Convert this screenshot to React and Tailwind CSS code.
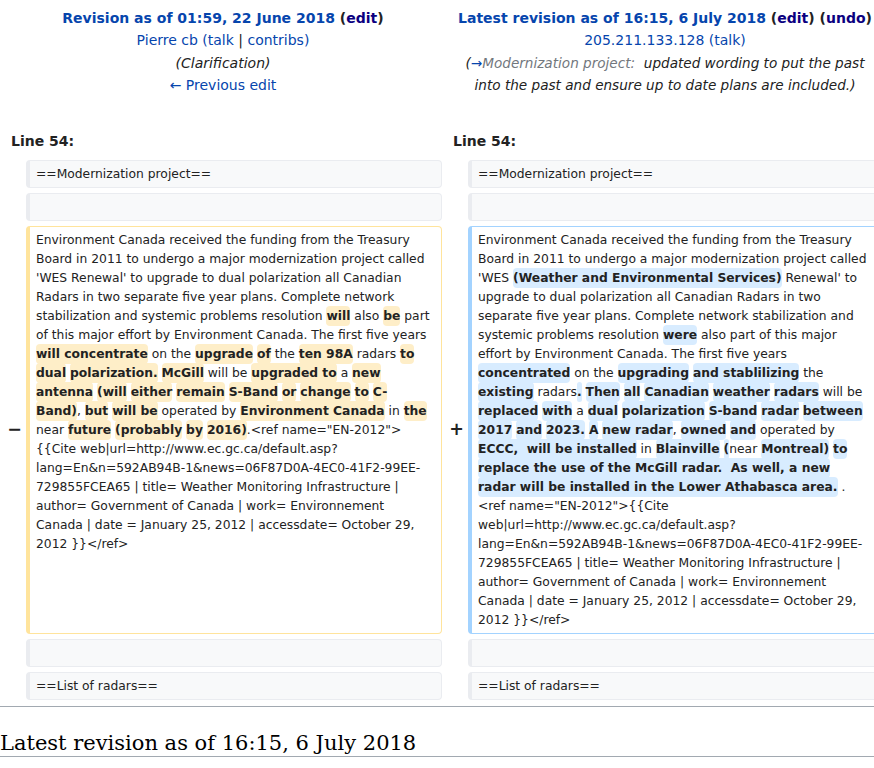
import React from "react";

const D = ({ children }) => (
  <span className="font-bold bg-[#feeec8] rounded-[0.33em] py-[0.25em]">{children}</span>
);
const A = ({ children }) => (
  <span className="font-bold bg-[#d8ecff] rounded-[0.33em] py-[0.25em]">{children}</span>
);

const boxBase =
  "border border-l-4 rounded-[0.33em] px-[6px] pt-[4px] pb-[3px] text-[12.32px] leading-[19px] text-[#222] whitespace-pre overflow-hidden";
const ctx = boxBase + " bg-[#f8f9fa] border-[#eaecf0]";

function Marker({ ch }) {
  return (
    <div className="flex items-center justify-end pr-[4px] text-[17.5px] font-bold text-[#222] leading-none">
      {ch}
    </div>
  );
}

export default function App() {
  const link = "text-[#0645ad]";
  const visited = "text-[#0b0080]";
  return (
    <div className="w-full overflow-hidden bg-white font-['DejaVu_Sans',sans-serif] text-[#222]">
      <div className="w-[884px]">
        {/* Header */}
        <div className="grid grid-cols-[442px_442px] pt-[7px] text-[14px] leading-[22.4px] text-center">
          <div className="pl-[4px]">
            <div className="px-[7px]">
              <div className="font-bold">
                <span className={link}>Revision as of 01:59, 22 June 2018</span>{" "}
                <span>
                  (<span className={visited}>edit</span>)
                </span>
              </div>
              <div>
                <span className={link}>Pierre cb</span>{" "}
                <span className={link}>
                  (talk <span className="text-[#222]">|</span> contribs)
                </span>
              </div>
              <div className="italic">(Clarification)</div>
              <div className={link}>← Previous edit</div>
            </div>
          </div>
          <div className="pl-[4px]">
            <div className="px-[7px]">
              <div className="font-bold">
                <span className={link}>Latest revision as of 16:15, 6 July 2018</span>{" "}
                <span>
                  (<span className={visited}>edit</span>)
                </span>{" "}
                <span>
                  (<span className={visited}>undo</span>)
                </span>
              </div>
              <div>
                <span className={link}>205.211.133.128</span>{" "}
                <span className={link}>(talk)</span>
              </div>
              <div className="italic text-[13.6px]">
                (<span className={link}>→</span>
                <span className="text-[#72777d]">Modernization project:</span>
                {"\u00a0 updated wording to put the past"}
                <br />
                into the past and ensure up to date plans are included.)
              </div>
            </div>
          </div>
        </div>

        {/* Line numbers */}
        <div className="grid grid-cols-[442px_442px] mt-[33px] text-[14px] leading-[22.4px] font-bold">
          <div className="pl-[11px]">Line 54:</div>
          <div className="pl-[11px]">Line 54:</div>
        </div>

        {/* Diff */}
        <div className="grid grid-cols-[26px_416px_26px_416px] gap-y-[5px] mt-[8px]">
          <div />
          <div className={ctx}>==Modernization project==</div>
          <div />
          <div className={ctx}>==Modernization project==</div>

          <div />
          <div className={ctx}>{" "}</div>
          <div />
          <div className={ctx}>{" "}</div>

          <Marker ch="−" />
          <div className={boxBase + " bg-white border-[#ffe49c]"}>
            {"Environment Canada received the funding from the Treasury\nBoard in 2011 to undergo a major modernization project called\n'WES Renewal' to upgrade to dual polarization all Canadian\nRadars in two separate five year plans. Complete network\nstabilization and systemic problems resolution "}
            <D>will</D>
            {" also "}
            <D>be</D>
            {" part\nof this major effort by Environment Canada. The first five years\n"}
            <D>will concentrate</D>
            {" on the "}
            <D>upgrade</D> <D>of</D>
            {" the "}
            <D>ten 98A</D>
            {" radars "}
            <D>to</D>
            {"\n"}
            <D>dual</D> <D>polarization.</D> <D>McGill</D>
            {" will be "}
            <D>upgraded to</D>
            {" a "}
            <D>new</D>
            {"\n"}
            <D>antenna</D> <D>(will</D> <D>either</D> <D>remain</D> <D>S-Band</D> <D>or</D> <D>change</D>{" "}
            <D>to</D> <D>C-</D>
            {"\n"}
            <D>Band)</D>
            {", "}
            <D>but</D> <D>will be</D>
            {" operated by "}
            <D>Environment Canada</D>
            {" in "}
            <D>the</D>
            {"\nnear "}
            <D>future</D> <D>(probably</D> <D>by</D> <D>2016)</D>
            {'.<ref name="EN-2012">\n{{Cite web|url=http://www.ec.gc.ca/default.asp?\nlang=En&n=592AB94B-1&news=06F87D0A-4EC0-41F2-99EE-\n729855FCEA65 | title= Weather Monitoring Infrastructure |\nauthor= Government of Canada | work= Environnement\nCanada | date = January 25, 2012 | accessdate= October 29,\n2012 }}</ref>'}
          </div>

          <Marker ch="+" />
          <div className={boxBase + " bg-white border-[#a3d3ff]"}>
            {"Environment Canada received the funding from the Treasury\nBoard in 2011 to undergo a major modernization project called\n'WES "}
            <A>(Weather and Environmental Services)</A>
            {" Renewal' to\nupgrade to dual polarization all Canadian Radars in two\nseparate five year plans. Complete network stabilization and\nsystemic problems resolution "}
            <A>were</A>
            {" also part of this major\neffort by Environment Canada. The first five years\n"}
            <A>concentrated</A>
            {" on the "}
            <A>upgrading</A> <A>and stablilizing</A>
            {" the\n"}
            <A>existing</A>
            {" radars"}
            <A>.</A> <A>Then</A> <A>all</A> <A>Canadian</A> <A>weather</A> <A>radars</A>
            {" will be\n"}
            <A>replaced</A> <A>with</A>
            {" a "}
            <A>dual</A> <A>polarization</A> <A>S-band</A> <A>radar</A> <A>between</A>
            {"\n"}
            <A>2017</A> <A>and</A> <A>2023.</A> <A>A</A> <A>new radar</A>
            {", "}
            <A>owned</A> <A>and</A>
            {" operated by\n"}
            <A>{"ECCC,  will be installed"}</A>
            {" in "}
            <A>Blainville</A> <A>(</A>
            {"near "}
            <A>Montreal)</A> <A>to</A>
            {"\n"}
            <A>{"replace the use of the McGill radar.  As well, a new"}</A>
            {"\n"}
            <A>{"radar will be installed in the Lower Athabasca area."}</A>
            {' .\n<ref name="EN-2012">{{Cite\nweb|url=http://www.ec.gc.ca/default.asp?\nlang=En&n=592AB94B-1&news=06F87D0A-4EC0-41F2-99EE-\n729855FCEA65 | title= Weather Monitoring Infrastructure |\nauthor= Government of Canada | work= Environnement\nCanada | date = January 25, 2012 | accessdate= October 29,\n2012 }}</ref>'}
          </div>

          <div />
          <div className={ctx}>{" "}</div>
          <div />
          <div className={ctx}>{" "}</div>

          <div />
          <div className={ctx}>==List of radars==</div>
          <div />
          <div className={ctx}>==List of radars==</div>
        </div>
      </div>

      <div className="mt-[6px] h-px bg-[#a2a9b1]" />
      <h2 className="mt-[23px] font-['DejaVu_Serif',serif] text-[21px] leading-[26px] text-black border-b border-[#a2a9b1]">
        Latest revision as of 16:15, 6 July 2018
      </h2>
      <div className="h-[20px]" />
    </div>
  );
}
